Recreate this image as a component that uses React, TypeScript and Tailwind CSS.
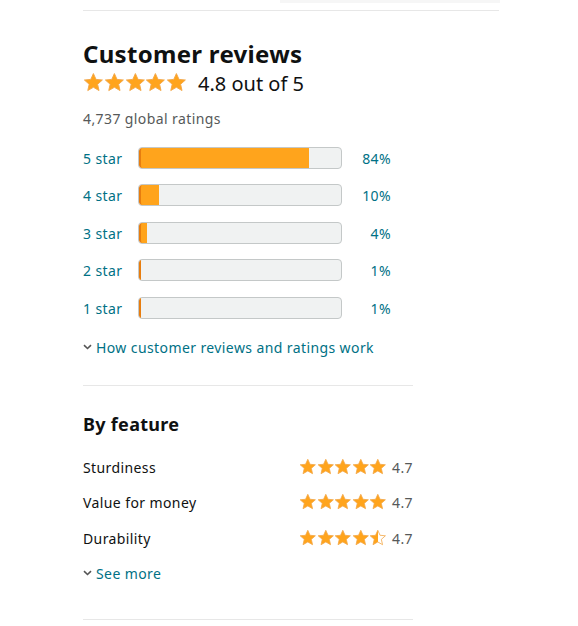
import { useId } from 'react'

const font = { fontFamily: '"Noto Sans", "Open Sans", Arial, sans-serif' }

const STAR = 'M12 1.8l3.05 6.75 7.35.7-5.55 4.9 1.65 7.25L12 17.65l-6.5 3.75 1.65-7.25-5.55-4.9 7.35-.7z'

function Star({ size, fill = 1 }: { size: number; fill?: number }) {
  const id = useId()
  return (
    <svg width={size} height={size} viewBox="0 0 24 24">
      <defs>
        <linearGradient id={id}>
          <stop offset={fill} stopColor="#ffa41c" />
          <stop offset={fill} stopColor="#ffffff" />
        </linearGradient>
      </defs>
      <path d={STAR} fill={`url(#${id})`} stroke="#f2a84a" strokeWidth="1.1" strokeLinejoin="round" />
    </svg>
  )
}

function Stars({ size, last = 1 }: { size: number; last?: number }) {
  return (
    <div className="flex items-center">
      {[1, 1, 1, 1, last].map((f, i) => (
        <Star key={i} size={size} fill={f} />
      ))}
    </div>
  )
}

function Chevron() {
  return (
    <svg width="9" height="6" viewBox="0 0 9 6" className="mr-[4px]">
      <path d="M1 1.2l3.5 3.3L8 1.2" fill="none" stroke="#555" strokeWidth="1.6" />
    </svg>
  )
}

const rows = [
  { label: '5 star', pct: 84, mt: 'mt-[18px]' },
  { label: '4 star', pct: 10, mt: 'mt-[15px]' },
  { label: '3 star', pct: 4, mt: 'mt-[16px]' },
  { label: '2 star', pct: 1, mt: 'mt-[15px]' },
  { label: '1 star', pct: 1, mt: 'mt-[16px]' },
]

const features = [
  { name: 'Sturdiness', last: 1, mt: 'mt-[21px]' },
  { name: 'Value for money', last: 1, mt: 'mt-[15px]' },
  { name: 'Durability', last: 0.5, mt: 'mt-[16px]' },
]

export default function App() {
  return (
    <div className="min-h-[626px] bg-white text-[#0f1111]" style={font}>
      {/* card shadow from the block above */}
      <div className="flex h-[10px]">
        <div className="ml-[280px] h-[3px] w-[220px] bg-[#f6f6f6]" />
      </div>
      <div className="ml-[83px] w-[416px] border-t border-[#e7e7e7]" />

      <div className="ml-[83px] w-[330px] text-[14px] tracking-[0.4px]">
        <h2 className="mt-[29px] h-[28px] text-[24px] font-bold leading-[28px] tracking-[0.3px]">Customer reviews</h2>

        <div className="mt-[4px] flex h-[20px] items-center">
          <Stars size={20.8} />
          <span className="ml-[11px] pt-[3px] text-[20px] leading-[20px] tracking-normal">4.8 out of 5</span>
        </div>

        <div className="mt-[17px] h-[20px] leading-[20px] text-[#565959]">4,737 global ratings</div>

        {rows.map((r) => (
          <div key={r.label} className={`${r.mt} flex h-[22px] items-center text-[#007185]`}>
            <span className="w-[55px] shrink-0">{r.label}</span>
            <div className="h-[22px] w-[204px] overflow-hidden rounded-[4px] border border-[#c4c8c8] bg-[#f0f2f2]">
              <div
                className="h-full rounded-l-[3px] border-l-2 border-[#e77d0f] bg-[#ffa41c]"
                style={{ width: `${r.pct}%` }}
              />
            </div>
            <span className="w-[49px] text-right">{r.pct}%</span>
          </div>
        ))}

        <div className="mt-[18px] flex h-[20px] items-center text-[#007185]">
          <Chevron />
          How customer reviews and ratings work
        </div>

        <div className="mt-[28px] border-t border-[#e7e7e7]" />

        <h3 className="mt-[26px] h-[24px] text-[18px] font-bold leading-[24px] tracking-[0.3px]">By feature</h3>

        {features.map((f) => (
          <div key={f.name} className={`${f.mt} flex h-[20px] items-center justify-between`}>
            <span>{f.name}</span>
            <div className="flex items-center">
              <Stars size={17.6} last={f.last} />
              <span className="ml-[5px] text-[#565959]">4.7</span>
            </div>
          </div>
        ))}

        <div className="mt-[15px] flex h-[20px] items-center text-[#007185]">
          <Chevron />
          See more
        </div>

        <div className="mt-[36px] border-t border-[#e7e7e7]" />
      </div>
    </div>
  )
}
